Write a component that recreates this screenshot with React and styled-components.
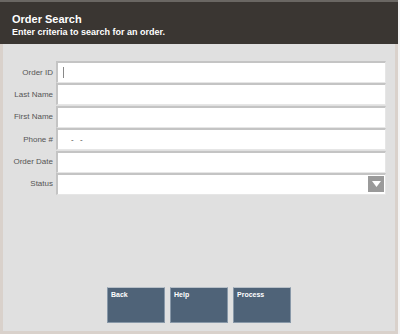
import styled, { createGlobalStyle } from "styled-components";

const Global = createGlobalStyle`
  html, body {
    margin: 0;
    padding: 0;
    background: #e0e0e0;
  }
  body {
    font-family: "Liberation Sans", Arial, sans-serif;
  }
`;

const fields = [
  { label: "Order ID", caret: true },
  { label: "Last Name" },
  { label: "First Name" },
  { label: "Phone #", value: "-  -" },
  { label: "Order Date" },
  { label: "Status", select: true },
];

function App() {
  return (
    <>
      <Global />
      <Screen>
        <Header>
          <h1>Order Search</h1>
          <p>Enter criteria to search for an order.</p>
        </Header>
        <Body>
          <Form>
            {fields.map((f) => (
              <Row key={f.label}>
                <Label>{f.label}</Label>
                <Input>
                  {f.caret && <Caret />}
                  {f.value && <Value>{f.value}</Value>}
                  {f.select && (
                    <Arrow>
                      <svg width="9" height="6" viewBox="0 0 9 6">
                        <path d="M0 0 H9 L4.5 6 Z" fill="#fff" />
                      </svg>
                    </Arrow>
                  )}
                </Input>
              </Row>
            ))}
          </Form>
          <Buttons>
            <Button>Back</Button>
            <Button>Help</Button>
            <Button>Process</Button>
          </Buttons>
        </Body>
      </Screen>
    </>
  );
}

export default App;

const Screen = styled.div`
  width: 400px;
  height: 334px;
  display: flex;
  flex-direction: column;
  box-sizing: border-box;
  border-right: 2px solid #f4f4f4;
  background: #e0e0e0;
`;

const Header = styled.div`
  height: 44px;
  box-sizing: border-box;
  background: #3a3632;
  border-top: 2px solid #6a6763;
  padding: 11px 12px 0;
  color: #fff;

  h1 {
    margin: 0;
    font-size: 11px;
    font-weight: bold;
    line-height: 13px;
  }
  p {
    margin: 0;
    font-size: 9px;
    font-weight: bold;
    line-height: 12px;
  }
`;

const Body = styled.div`
  flex: 1;
  display: flex;
  flex-direction: column;
  box-sizing: border-box;
  border-left: 3px solid #d9d1cb;
  border-right: 3px solid #d9d1cb;
  border-bottom: 3px solid #d9d1cb;
  background: #e0e0e0;
`;

const Form = styled.div`
  display: flex;
  flex-direction: column;
  gap: 0.4px;
  padding: 17px 9px 0 0;
`;

const Row = styled.div`
  display: flex;
  align-items: center;
  height: 22px;
`;

const Label = styled.div`
  width: 50px;
  padding-right: 3px;
  text-align: right;
  font-size: 8px;
  color: #555;
`;

const Input = styled.div`
  flex: 1;
  height: 22px;
  box-sizing: border-box;
  background: #fff;
  border-top: 2px solid #c4c4c4;
  border-left: 2px solid #c4c4c4;
  border-right: 1px solid #e6e6e6;
  border-bottom: 1px solid #e6e6e6;
  display: flex;
  align-items: center;
  padding-left: 5px;
  position: relative;
`;

const Caret = styled.span`
  width: 1px;
  height: 11px;
  background: #888;
`;

const Value = styled.span`
  font-size: 8px;
  color: #444;
  padding-left: 8px;
  letter-spacing: 2px;
`;

const Arrow = styled.div`
  position: absolute;
  right: 1px;
  top: 1px;
  width: 16px;
  height: 16px;
  background: #9a9a9a;
  display: flex;
  align-items: center;
  justify-content: center;
`;

const Buttons = styled.div`
  margin-top: auto;
  margin-bottom: 8px;
  display: flex;
  justify-content: center;
  gap: 5px;
`;

const Button = styled.div`
  width: 58px;
  height: 36px;
  box-sizing: border-box;
  background: #4f6378;
  border: 1px solid #8898a8;
  border-top-color: #b8c0c8;
  color: #fff;
  font-size: 7px;
  font-weight: bold;
  padding: 3px 3px;
`;
